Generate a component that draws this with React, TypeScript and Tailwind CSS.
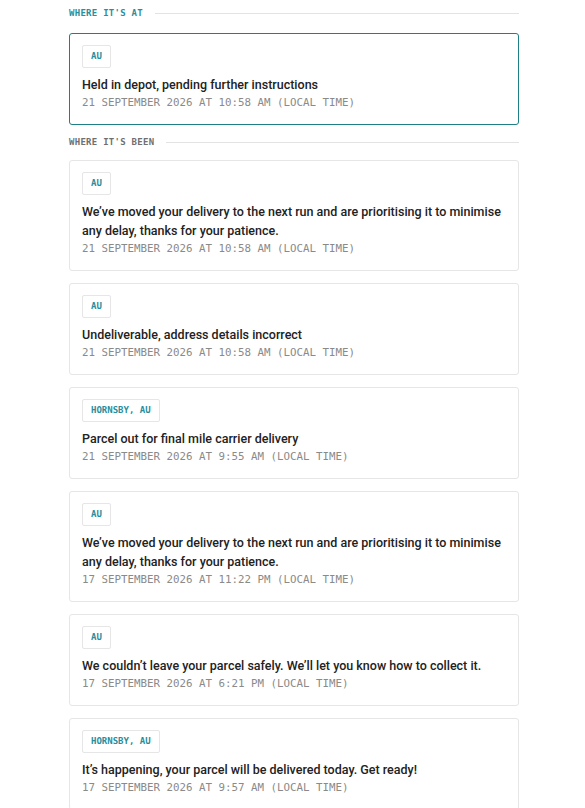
import React from "react";

type Item = { loc: string; text: string; time: string };

const been: Item[] = [
  { loc: "AU", text: "We\u2019ve moved your delivery to the next run and are prioritising it to minimise any delay, thanks for your patience.", time: "21 SEPTEMBER 2026 AT 10:58 AM (LOCAL TIME)" },
  { loc: "AU", text: "Undeliverable, address details incorrect", time: "21 SEPTEMBER 2026 AT 10:58 AM (LOCAL TIME)" },
  { loc: "HORNSBY, AU", text: "Parcel out for final mile carrier delivery", time: "21 SEPTEMBER 2026 AT 9:55 AM (LOCAL TIME)" },
  { loc: "AU", text: "We\u2019ve moved your delivery to the next run and are prioritising it to minimise any delay, thanks for your patience.", time: "17 SEPTEMBER 2026 AT 11:22 PM (LOCAL TIME)" },
  { loc: "AU", text: "We couldn\u2019t leave your parcel safely. We\u2019ll let you know how to collect it.", time: "17 SEPTEMBER 2026 AT 6:21 PM (LOCAL TIME)" },
  { loc: "HORNSBY, AU", text: "It\u2019s happening, your parcel will be delivered today. Get ready!", time: "17 SEPTEMBER 2026 AT 9:57 AM (LOCAL TIME)" },
];

const mono = { fontFamily: '"DejaVu Sans Mono", "Liberation Mono", monospace' };

function Card({ item, active }: { item: Item; active?: boolean }) {
  return (
    <div
      className={
        "rounded-[3px] border bg-white px-[12px] pt-[11px] pb-[12px] " +
        (active ? "border-[#1f7f86]" : "border-[#e6e6e6]")
      }
    >
      <div className="flex">
        <span
          className="flex h-[23px] items-center rounded-[2px] border border-[#e6e6e6] px-[8px] text-[9px] font-bold text-[#2a8d9c]"
          style={mono}
        >
          {item.loc}
        </span>
      </div>
      <div className="mt-[7px] text-[12.5px] font-medium leading-[19px] text-[#222]" style={{ fontFamily: "Roboto, sans-serif" }}>
        {item.text}
      </div>
      <div className="text-[10.8px] leading-[18px] text-[#8a8a8a]" style={mono}>
        {item.time}
      </div>
    </div>
  );
}

function Heading({ label, teal }: { label: string; teal?: boolean }) {
  return (
    <div className="flex items-center gap-[12px]">
      <span
        className={"text-[9px] font-bold leading-[12px] tracking-[0.03em] " + (teal ? "text-[#2a8d9c]" : "text-[#6f6f6f]")}
        style={mono}
      >
        {label}
      </span>
      <div className="h-px flex-1 bg-[#e3e3e3]" />
    </div>
  );
}

export default function App() {
  return (
    <div className="min-h-[808px] w-[585px] bg-white">
      <div className="ml-[69px] w-[450px] pt-[7px]">
        <Heading label="WHERE IT'S AT" teal />
        <div className="mt-[14px]">
          <Card
            active
            item={{ loc: "AU", text: "Held in depot, pending further instructions", time: "21 SEPTEMBER 2026 AT 10:58 AM (LOCAL TIME)" }}
          />
        </div>
        <div className="mt-[11px]">
          <Heading label="WHERE IT'S BEEN" />
        </div>
        <div className="mt-[12px] flex flex-col gap-[12px]">
          {been.map((it, i) => (
            <Card key={i} item={it} />
          ))}
        </div>
      </div>
    </div>
  );
}
